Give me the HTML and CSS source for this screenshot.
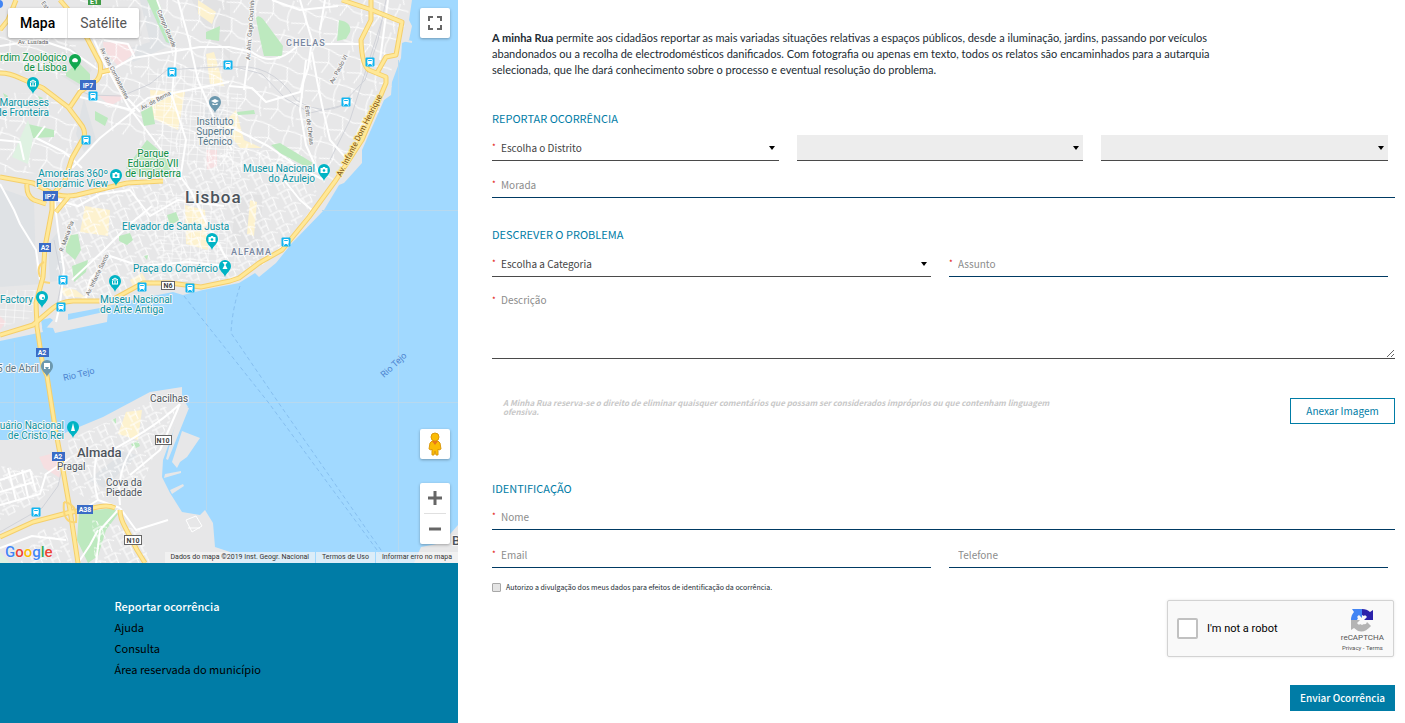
FILE: index.html
```html
<!DOCTYPE html>
<html lang="pt">
<head>
<meta charset="utf-8">
<title>A minha Rua</title>
<link rel="stylesheet" href="styles.css">
</head>
<body>
<div class="page">
  <aside class="side">
    <div class="map">
      <svg class="map-canvas" viewBox="0 0 458 563" preserveAspectRatio="xMidYMid slice" role="img" aria-label="Mapa de Lisboa">
        <defs>
          <pattern id="grid" width="9" height="7" patternUnits="userSpaceOnUse" patternTransform="rotate(4)">
            <path d="M0 0H9M0 0V7" class="thin"/>
          </pattern>
          <pattern id="weave" width="17" height="15" patternUnits="userSpaceOnUse" patternTransform="rotate(-28)">
            <path d="M0 2H12L17 6M4 2V15M12 2L10 15M4 9H11" class="thin"/>
          </pattern>
          <pattern id="loose" width="34" height="30" patternUnits="userSpaceOnUse" patternTransform="rotate(18)">
            <path d="M0 8Q14 2 34 8M8 6Q4 18 12 30M8 0V6M22 5L26 18L34 22M12 22L26 18L22 30M0 22H10" class="thin"/>
          </pattern>
          <g id="pin">
            <path d="M0 9C-1 5-6 3-6-2A6 6 0 0 1 6-2C6 3 1 5 0 9Z"/>
          </g>
          <g id="museum" fill="none" stroke="#fff"><path d="M-3-3L0-5L3-3ZM-2.500-2V1M0-2V1M2.500-2V1M-3 1H3"/></g>
          <g id="camera"><path d="M-3.500-4H-1.500L-1-5H1L1.500-4H3.500V1H-3.500Z" fill="#fff"/><circle cy="-1.500" r="1.300" class="teal"/></g>
          <g id="train">
            <rect x="-4.500" y="-4.500" width="9" height="9" rx="1" fill="#12b5f0"/>
            <rect x="-2.700" y="-3" width="5.400" height="5" rx="1" fill="#fff"/>
            <path d="M-1.800-1.500H1.800" stroke="#12b5f0"/>
            <path d="M-2.500 3.500L-1.500 2M2.500 3.500L1.500 2" stroke="#fff"/>
          </g>
          <g id="trunk" fill="none" stroke-linejoin="round">
            <path d="M0 73Q10 73 20 78L43 88L68 107L80 123Q86 130 84 137L72 158L65 180L54 193"/>
            <path d="M16 0L8 20L0 30M60 0L77 20L88 40L100 63Q102 74 97 80L80 92L70 107M101 72L110 70"/>
            <path d="M0 177L33 183L50 192Q62 198 77 195L127 183L163 181M27 184Q26 196 34 200L46 204M70 195L56 212"/>
            <path d="M52 193V210L45 247L43 277L36 303L37 327L43 367L47 376L55 427L63 470L70 510L78 563"/>
            <path d="M0 335L33 325L53 308Q60 302 73 301H110L143 283H170L201 287L230 281L239 278L259 263L282 250L309 217L336 180L362 140L386 83V77L369 70Q362 66 361 40L371 20V0"/>
            <path d="M342 0L372 10L402 22L396 55L386 57L377 73"/>
            <path d="M0 537L33 522L67 513L93 508Q108 504 115 508M120 510Q120 518 125 527L137 550L145 563"/>
          </g>
        </defs>

        <rect width="458" height="563" fill="#e7e7e8"/>

        <g fill="#dfe2e5">
          <path d="M0 188L34 200L36 270L42 284L0 287Z"/>
          <path d="M140 0H157L172 45L133 62L124 50L150 42Z"/>
          <path d="M84 98L96 140L84 152L76 134ZM48 244L58 232L64 280L50 282Z"/>
          <path d="M88 480L124 452L138 455L104 488ZM205 110L224 106L222 122L204 124Z"/>
        </g>
        <path d="M192 0H230V60L212 42ZM0 40H66L92 70L78 86L40 62H0ZM235 195H262V262L232 244Z" fill="#dedede" opacity=".5"/>
        <g fill="#f6dfe1">
          <path d="M103 42L128 43L135 53L118 66L104 50ZM98 95H130L110 106ZM39 457L58 452L60 478L44 468ZM206 150H217V166L207 170ZM0 316L6 322L0 330Z"/>
        </g>
        <g fill="#fdf2cf">
          <path d="M85 206L110 210L108 236L80 232ZM150 90L185 92L178 130L152 118ZM198 0L216 12L212 24L198 14ZM206 54L214 52L224 86L210 84ZM126 412L142 410L138 440L118 434ZM185 205L205 210L208 250L186 244ZM250 200L257 202L254 236L247 234ZM60 287L76 290L86 298L64 296ZM130 280L142 273L146 280L134 288ZM222 125L236 110L244 140L262 148L240 148Z"/>
        </g>

        <path d="M80 0H412L380 110L335 183L270 180L150 150L110 130Z" fill="url(#loose)"/>
        <path d="M56 95L80 130L70 175L0 172V92ZM0 30L80 34L64 80L0 70Z" fill="url(#loose)"/>
        <path d="M146 70L222 62L232 150L220 180L160 150Z" fill="url(#grid)"/>
        <path d="M56 200L230 150L300 150L318 195L280 246L230 280L140 282L104 300L60 300L56 270L66 240Z" fill="url(#weave)"/>
        <path d="M150 195L210 190L240 265L160 280Z" fill="url(#grid)"/>
        <path d="M228 92L242 94L240 180L226 190ZM0 290L40 290L30 318L0 328Z" fill="url(#grid)"/>

        <g fill="#bde9bf">
          <path d="M66 73L78 62L90 74L90 90L66 76Z"/>
          <path d="M206 32L220 26L219 41L206 39Z"/>
          <path d="M147 0H158L176 46L166 42Z"/>
          <path d="M141 112L152 106L155 124L144 126ZM95 111L108 118L105 126L95 120ZM147 140L168 158L170 170L140 176L126 168Z"/>
          <path d="M256 18Q258 14 263 19L283 46L282 56L264 56Q260 40 256 18Z"/>
          <path d="M339 20Q352 22 350 32L346 39L337 41Z"/>
          <path d="M237 112L254 110L255 114L238 115ZM65 236L78 234L81 250L75 260L66 252ZM72 266L88 260L86 272L74 282ZM119 236L130 233L133 240L127 245L119 241ZM167 215L176 212L179 220L170 226ZM131 444L138 441L140 446L134 449ZM144 256L148 255L147 260ZM112 420L116 418V424Z"/>
          <path d="M79 512L114 508L118 514L106 530L98 556L88 563L77 540Z"/>
          <path d="M28 124L54 130L54 137L33 138ZM3 93L8 96L6 100ZM38 96L43 98L40 101Z"/>
          <path d="M271 145L280 143L313 163L308 168L280 153Z"/>
        </g>
        <path d="M28 120L33 138L28 164L12 157ZM0 552L0 563H10Z" fill="#dff2e2"/>

        <g fill="none" stroke="#d1d3d9" stroke-width="1">
          <path d="M78 90L90 95L122 96L150 84L167 70L232 66L262 74L285 98L310 113L340 106L365 80L378 40L386 0"/>
          <path d="M229 68Q270 60 296 100Q330 120 352 98M330 160L350 120L382 20"/>
          <path d="M0 532L42 508L58 486L64 460M56 310L62 280L54 240"/>
        </g>

        <g class="road">
          <path d="M78 90Q110 70 133 58L200 47L229 47L252 52Q270 66 290 52L300 44H361"/>
          <path d="M88 26L103 60L128 106L163 152L190 190L206 222L226 258"/>
          <path d="M80 97L132 110L148 98L229 82M0 46L40 40L70 50L96 68"/>
          <path d="M135 110L100 138L72 168M135 58L128 44L104 40M178 0L189 40L198 80L214 118L232 150"/>
          <path d="M157 0L176 50L172 96L186 140L180 180"/>
          <path d="M229 86L252 88L266 102L300 92L308 68L312 40L300 0M312 52L317 80L322 105L330 140L346 158"/>
          <path d="M229 126L268 146L300 168L324 180M306 60L300 110L306 145L318 172"/>
          <path d="M252 0L248 60L244 90M272 0L300 10L338 6M325 0L320 30M388 0L380 60"/>
          <path d="M0 184L14 210L20 224L36 250L40 280M54 196L58 230L64 270L60 304L56 322"/>
          <path d="M56 200L78 206L100 194L130 190L150 216L178 200L224 206M72 280L104 250L130 224L152 206"/>
          <path d="M86 298L90 280L110 256L140 266L188 262L226 266M284 180L300 200L312 210L290 240L262 264"/>
          <path d="M180 404Q150 432 96 458Q92 480 98 500L120 508M180 404L160 450L130 475M134 446Q116 470 120 505"/>
          <path d="M0 505L40 494L46 474L70 458M98 500L82 510M0 548L32 536L66 540M120 508L136 530L168 520M96 563L100 530L118 510"/>
          <path d="M78 563L90 545L98 530M0 480L30 470L36 492M0 492L34 482M8 468L16 500M22 470L28 497"/>
          <path d="M45 126L36 138L64 152L82 168M0 140L20 142L24 160M103 60L118 88L140 112"/>
        </g>
        <g fill="url(#weave)">
          <path d="M68 440L150 402L176 410L160 440L140 490L90 500L72 490Z"/>
          <path d="M0 466L40 472L60 480L40 500L0 520ZM40 530L66 526L72 563H20ZM92 520L140 530L150 563H95Z"/>
        </g>

        <path class="water" d="M412 0L409 20L412 26L409 40L402 43L401 58L392 82L391 95L384 100L381 107L362 150V163L344 183L339 185L324 210L292 243L276 263L259 277L255 273L239 283L229 285L203 290L183 295L173 292L133 300L100 308L68 314V320L108 311L107 322L55 333L53 328L42 327L43 332L0 341V440L53 440L67 432L103 417L150 392L182 387V397L188 407L176 424L163 460L162 477L170 493L182 512L200 515L205 510L213 523L215 547L230 552V563H414L421 547L442 543L451 533L458 525V0Z"/>
        <path d="M182 431L200 438L187 457L180 462L177 468L172 462ZM165 474L181 471V473L164 478ZM180 406L189 408L168 460L166 459ZM170 490L183 484L184 486L172 494Z" fill="#e7e7e8"/>
        <path d="M43 332L53 320L50 318L41 320Z" class="water"/>
        <path d="M384 96L391 86M380 105L384 96M402 40L412 42" stroke="#e7e7e8" stroke-width="2"/>
        <path d="M398.500 60V563M14.500 342V440M206.500 292V510M322 210.500H458M188 402.500H458M0 402.500H124" fill="none" stroke="#b7d9ef"/>
        <path d="M240 286Q232 310 231 333L278 402L390 563M184 296L268 402L380 554" fill="none" stroke="#86bff0" stroke-dasharray="4 3"/>
        <path d="M186 520L196 516L202 526L192 532ZM188 528H200" fill="none" stroke="#fff"/>

        <use href="#trunk" class="trunk-edge"/>
        <use href="#trunk" class="trunk-fill"/>
        <path d="M40 277Q36 266 44 262M44 282L50 283M64 502Q78 504 76 522Q62 524 64 502" fill="none" stroke="#fad676" stroke-width="2"/>

        <g class="label park">
          <text x="67" y="61" text-anchor="end">rdim Zoológico</text><text x="67" y="71" text-anchor="end">de Lisboa</text>
          <text x="153" y="157" text-anchor="middle">Parque</text><text x="153" y="167" text-anchor="middle">Eduardo VII</text><text x="153" y="177" text-anchor="middle">de Inglaterra</text>
        </g>
        <g class="label sight">
          <text x="49" y="106" text-anchor="end">Marqueses</text><text x="49" y="116" text-anchor="end">de Fronteira</text>
          <text x="108" y="177" text-anchor="end">Amoreiras 360º</text><text x="108" y="187" text-anchor="end">Panoramic View</text>
          <text x="315" y="172" text-anchor="end">Museu Nacional</text><text x="315" y="182" text-anchor="end">do Azulejo</text>
          <text x="122" y="230">Elevador de Santa Justa</text>
          <text x="133" y="272">Praça do Comércio</text>
          <text x="100" y="303">Museu Nacional</text><text x="100" y="313">de Arte Antiga</text>
          <text x="33" y="303" text-anchor="end">Factory</text>
          <text x="64" y="429" text-anchor="end">uário Nacional</text><text x="64" y="439" text-anchor="end">de Cristo Rei</text>
        </g>
        <g class="label civic">
          <text x="215" y="125" text-anchor="middle">Instituto</text><text x="215" y="135" text-anchor="middle">Superior</text><text x="215" y="145" text-anchor="middle">Técnico</text>
          <text x="39" y="372" text-anchor="end">5 de Abril</text>
        </g>
        <g class="label place">
          <text x="150" y="402">Cacilhas</text><text x="57" y="470">Pragal</text>
          <text x="124" y="486" text-anchor="middle">Cova da</text><text x="124" y="496" text-anchor="middle">Piedade</text>
        </g>
        <text class="label city" x="185" y="203">Lisboa</text>
        <text class="label town" x="77" y="457">Almada</text>
        <text class="label town" x="452" y="545">B</text>
        <g class="label district"><text x="286" y="46">CHELAS</text><text x="231" y="255">ALFAMA</text></g>
        <g class="label street">
          <text x="18" y="44">Av. Lusíada</text>
          <text transform="translate(41 3) rotate(55)">Estr.</text>
          <text transform="translate(100 49) rotate(63)">Av. dos Combatentes</text>
          <text transform="translate(157 11) rotate(67)">Campo Grande</text>
          <text transform="translate(142 110) rotate(-28)">Av. de Berna</text>
          <text transform="translate(250 60) rotate(-86)">Av. Alm. Gago Coutinho</text>
          <text transform="translate(333 84) rotate(-62)">Av. Paulo VI</text>
          <text transform="translate(305 106) rotate(83)">Estr. de Chelas</text>
          <text transform="translate(63 252) rotate(-70)">R. Maria Pia</text>
          <text transform="translate(89 296) rotate(-64)">Av. Infante Santo</text>
        </g>
        <text class="label avenue" transform="translate(341 177) rotate(-63)">Av. Infante Dom Henrique</text>
        <g class="label river"><text transform="translate(64 381) rotate(-14)">Rio Tejo</text><text transform="translate(384 378) rotate(-43)">Rio Tejo</text></g>

        <g class="shield">
          <rect x="80" y="80" width="16" height="10"/><text x="88" y="88">IP7</text>
          <rect x="43" y="191" width="15" height="10"/><text x="50" y="199">IP7</text>
          <rect x="39" y="243" width="12" height="9"/><text x="45" y="250">A2</text>
          <rect x="36" y="348" width="13" height="9"/><text x="42" y="355">A2</text>
          <rect x="52" y="452" width="13" height="9"/><text x="58" y="459">A2</text>
          <rect x="77" y="505" width="16" height="9"/><text x="85" y="512">A38</text>
        </g>
        <g class="shield national">
          <rect x="161.500" y="281.500" width="13" height="8"/><text x="168" y="288">N6</text>
          <rect x="155.500" y="435.500" width="16" height="9"/><text x="163" y="443">N10</text>
          <rect x="124.500" y="535.500" width="17" height="9"/><text x="133" y="543">N10</text>
        </g>
        <g class="shield european"><rect x="88" y="-5" width="13" height="10"/><text x="94" y="4">E1</text></g>

        <g fill="#12a84f"><use href="#pin" x="75" y="62"/></g>
        <path d="M72 60Q75 56 78 60Q78 63 75 62Q72 63 72 60Z" fill="#fff"/>
        <g class="teal">
          <use href="#pin" x="33" y="85"/><use href="#pin" x="116" y="177"/><use href="#pin" x="324" y="172"/>
          <use href="#pin" x="212" y="241"/><use href="#pin" x="225" y="268"/><use href="#pin" x="115" y="283"/>
          <use href="#pin" x="42" y="299"/><use href="#pin" x="73" y="429"/>
        </g>
        <g fill="#6c98ae"><use href="#pin" x="215" y="104"/><use href="#pin" x="47" y="368"/></g>
        <use href="#museum" x="33" y="85"/><use href="#museum" x="115" y="283"/>
        <use href="#camera" x="116" y="177"/><use href="#camera" x="324" y="172"/><use href="#camera" x="212" y="241"/>
        <g fill="#fff">
          <path d="M222.500 262H227.500L225.500 265L227.500 269H222.500L224.500 265ZM73 423L75 431H71ZM215 99L219 101L215 103L211 101ZM212.500 103L215 104.500L217.500 103V105H212.500Z"/>
          <path d="M44 369V363H50V369H48L49 367H45L46 369Z"/>
          <circle cx="42" cy="297" r="3"/>
        </g>
        <circle cx="43" cy="298" r="1" class="teal"/>

        <use href="#train" x="172" y="72"/><use href="#train" x="93" y="96"/><use href="#train" x="86" y="140"/>
        <use href="#train" x="228" y="65"/><use href="#train" x="370" y="62"/>
        <use href="#train" x="346" y="102"/><use href="#train" x="286" y="242"/><use href="#train" x="63" y="280"/>
        <use href="#train" x="61" y="307"/><use href="#train" x="142" y="287"/><use href="#train" x="190" y="288"/>
        <use href="#train" x="36" y="512"/>
        <circle cx="-1" cy="4" r="4" fill="#4285f4"/>
      </svg>

      <div class="map-types">
        <button type="button" class="map-type is-active">Mapa</button>
        <button type="button" class="map-type">Satélite</button>
      </div>
      <button type="button" class="map-btn fullscreen" aria-label="Ecrã inteiro">
        <svg width="14" height="14" viewBox="0 0 14 14"><path d="M1 5V1H5M9 1H13V5M13 9V13H9M5 13H1V9" fill="none" stroke="#666" stroke-width="2"/></svg>
      </button>
      <div class="map-tools">
        <button type="button" class="map-btn" aria-label="Street View">
          <svg width="14" height="24" viewBox="0 0 14 24">
            <path d="M4 9H10L12 11L13 17L11 18L10 17V23H8L7 19L6 23H4V17L3 18L1 17L2 11Z" fill="#fbbc05" stroke="#dc9a0c"/>
            <path d="M4 9H10L7 13Z" fill="#e8751a"/>
            <circle cx="7" cy="5" r="4" fill="#fbbc05" stroke="#dc9a0c"/>
          </svg>
        </button>
        <div class="zoom">
          <button type="button" class="zoom-btn" aria-label="Aumentar"><svg width="14" height="14" viewBox="0 0 14 14"><path d="M7 0V14M0 7H14" stroke="#666" stroke-width="3"/></svg></button>
          <button type="button" class="zoom-btn" aria-label="Diminuir"><svg width="14" height="14" viewBox="0 0 14 14"><path d="M1 7H13" stroke="#666" stroke-width="3"/></svg></button>
        </div>
      </div>
      <a class="google" href="#google"><span class="g-blue">G</span><span class="g-red">o</span><span class="g-yellow">o</span><span class="g-blue">g</span><span class="g-green">l</span><span class="g-red">e</span></a>
      <div class="credits">
        <span>Dados do mapa ©2019 Inst. Geogr. Nacional</span>
        <a href="#termos">Termos de Uso</a>
        <a href="#erro">Informar erro no mapa</a>
      </div>
    </div>
    <nav class="menu">
      <a class="menu-link is-current" href="#reportar">Reportar ocorrência</a>
      <a class="menu-link" href="#ajuda">Ajuda</a>
      <a class="menu-link" href="#consulta">Consulta</a>
      <a class="menu-link" href="#area">Área reservada do município</a>
    </nav>
  </aside>

  <main class="content">
    <p class="intro"><strong>A minha Rua</strong> permite aos cidadãos reportar as mais variadas situações relativas a espaços públicos, desde a iluminação, jardins, passando por veículos abandonados ou a recolha de electrodomésticos danificados. Com fotografia ou apenas em texto, todos os relatos são encaminhados para a autarquia selecionada, que lhe dará conhecimento sobre o processo e eventual resolução do problema.</p>
    <form class="form">
      <section class="section">
        <h2 class="title">REPORTAR OCORRÊNCIA</h2>
        <div class="row thirds">
          <label class="field pick"><span class="star">*</span><select class="control" aria-label="Distrito"><option>Escolha o Distrito</option></select></label>
          <label class="field pick off"><select class="control" aria-label="Concelho" disabled><option></option></select></label>
          <label class="field pick off"><select class="control" aria-label="Freguesia" disabled><option></option></select></label>
        </div>
        <label class="field navy"><span class="star">*</span><input class="control" type="text" placeholder="Morada" aria-label="Morada"></label>
      </section>

      <section class="section">
        <h2 class="title">DESCREVER O PROBLEMA</h2>
        <div class="row halves">
          <label class="field pick"><span class="star">*</span><select class="control" aria-label="Categoria"><option>Escolha a Categoria</option></select></label>
          <label class="field navy"><span class="star">*</span><input class="control" type="text" placeholder="Assunto" aria-label="Assunto"></label>
        </div>
        <label class="field area"><span class="star">*</span><textarea class="control" placeholder="Descrição" aria-label="Descrição"></textarea></label>
        <div class="attach">
          <p class="notice">A Minha Rua reserva-se o direito de eliminar quaisquer comentários que possam ser considerados impróprios ou que contenham linguagem ofensiva.</p>
          <button type="button" class="btn">Anexar Imagem</button>
        </div>
      </section>

      <section class="section identity">
        <h2 class="title">IDENTIFICAÇÃO</h2>
        <label class="field navy"><span class="star">*</span><input class="control" type="text" placeholder="Nome" aria-label="Nome"></label>
        <div class="row halves contact">
          <label class="field navy"><span class="star">*</span><input class="control" type="email" placeholder="Email" aria-label="Email"></label>
          <label class="field navy"><span class="star"></span><input class="control" type="tel" placeholder="Telefone" aria-label="Telefone"></label>
        </div>
        <label class="consent"><input class="tick" type="checkbox"><span>Autorizo a divulgação dos meus dados para efeitos de identificação da ocorrência.</span></label>
      </section>

      <div class="captcha">
        <label class="robot"><input class="robot-box" type="checkbox"><span>I'm not a robot</span></label>
        <div class="brand">
          <svg width="24" height="24" viewBox="0 0 24 24">
            <path d="M12 1Q17 1 20 4L23 2V12H14L17 9Q15 6 14 8L12 7Z" fill="#2b22ab"/>
            <path d="M1 12Q1 7 4 4L2 1H12V10L9 7Q6 9 8 10L7 12Z" fill="#4285f4"/>
            <path d="M1 12H10L7 15Q9 18 10 16L12 17L14 16Q16 17 17 14L21 18Q12 28 4 20L1 22Z" fill="#b4b4b4"/>
          </svg>
          <span class="brand-name">reCAPTCHA</span>
          <span class="legal"><a href="#privacy">Privacy</a> - <a href="#terms">Terms</a></span>
        </div>
      </div>
      <button type="submit" class="btn primary">Enviar Ocorrência</button>
    </form>
  </main>
</div>
</body>
</html>
```
FILE: styles.css
```css
*, *::before, *::after { box-sizing: border-box; }
body { margin: 0; background: #fff; color: #222b33; font-family: "Noto Sans CJK SC", "Open Sans", sans-serif; font-size: 10px; line-height: 18px; }
a { color: inherit; text-decoration: none; }
button, input, select, textarea { margin: 0; font: inherit; color: inherit; }
button { cursor: pointer; }

.page { display: grid; grid-template-columns: 458fr 947fr; min-height: 100vh; }

/* Map */
.side { display: flex; flex-direction: column; background: #007ca6; }
.map { position: relative; flex: 1; min-height: 400px; overflow: hidden; font-family: Roboto, sans-serif; }
.map-canvas { position: absolute; inset: 0; display: block; width: 100%; height: 100%; }
.thin { fill: none; stroke: #fff; stroke-width: 1; }
.road { fill: none; stroke: #fff; stroke-width: 2; stroke-linejoin: round; }
.water { fill: #a1d9ff; }
.teal { fill: #00b4c5; }
.trunk-edge { stroke: #f5cf6b; stroke-width: 5; }
.trunk-fill { stroke: #ffe897; stroke-width: 3; }
.label { font-family: Roboto, sans-serif; font-size: 10px; paint-order: stroke; stroke: #f6f6f6; stroke-width: 2px; stroke-linejoin: round; }
.park { fill: #0b8f43; }
.sight { fill: #0a93a3; }
.civic { fill: #56788a; }
.place { fill: #50575d; }
.city { font-size: 17px; font-weight: 500; fill: #4c535c; letter-spacing: 1px; }
.town { font-size: 13px; font-weight: 500; fill: #4c535c; }
.district { font-size: 9px; fill: #7786a0; letter-spacing: 1px; font-weight: 500; }
.street { font-size: 6px; fill: #666; }
.avenue { font-size: 8px; fill: #7c5210; stroke: #ffe897; }
.river { font-size: 9px; fill: #4d84cf; stroke: none; }
.shield { font-size: 7px; font-weight: 700; text-anchor: middle; fill: #fff; }
.shield rect { fill: #3a6cc6; }
.national { fill: #444; }
.national rect { fill: #fff; stroke: #666; }
.european rect { fill: #3f9b46; }

.map-types { position: absolute; top: 8px; left: 8px; display: flex; background: #fff; border-radius: 2px; box-shadow: 0 1px 3px rgba(0, 0, 0, .3); }
.map-type { height: 30px; padding: 0 12px; border: 0; background: none; font-size: 14px; color: #565656; }
.map-type + .map-type { border-left: 1px solid #e6e6e6; }
.map-type.is-active { font-weight: 500; color: #000; }
.map-btn { display: grid; place-items: center; width: 30px; height: 30px; padding: 0; border: 0; border-radius: 2px; background: #fff; box-shadow: 0 1px 3px rgba(0, 0, 0, .3); }
.fullscreen { position: absolute; top: 8px; right: 8px; }
.map-tools { position: absolute; right: 8px; bottom: 19px; display: grid; gap: 24px; }
.zoom { display: grid; width: 30px; padding: 0 4px; border-radius: 2px; background: #fff; box-shadow: 0 1px 3px rgba(0, 0, 0, .3); }
.zoom-btn { display: grid; place-items: center; height: 30px; padding: 0; border: 0; background: none; }
.zoom-btn + .zoom-btn { height: 31px; border-top: 1px solid #e0e0e0; }
.google { position: absolute; left: 5px; bottom: 0; font-size: 15px; font-weight: 500; line-height: 22px; text-shadow: 0 0 1px #fff, 0 0 1px #fff; }
.g-blue { color: #4285f4; }
.g-red { color: #ea4335; }
.g-yellow { color: #fbbc05; }
.g-green { color: #34a853; }
.credits { position: absolute; right: 0; bottom: 0; display: flex; gap: 1px; font-size: 7px; line-height: 11px; color: #333; white-space: nowrap; }
.credits > * { padding: 0 6px; background: rgba(245, 245, 245, .7); }

.menu { display: flex; flex-direction: column; gap: 3px; padding: 34px 16px 45px 25%; font-size: 11px; color: #000; }
.menu-link.is-current { color: #fff; font-weight: 500; }

/* Form */
.content { padding: 30px 10px 12px 34px; }
.intro { max-width: 736px; margin: 0 0 31px; font-family: Lato, sans-serif; font-size: 11px; line-height: 16px; }
.form { display: flex; flex-direction: column; }
.section { margin-bottom: 27px; }
.title { margin: 0 0 8px; font-size: 11px; font-weight: 400; line-height: 18px; color: #007ca6; }
.row { display: grid; gap: 18px; margin: 0 7px 11px 0; }
.thirds { grid-template-columns: repeat(3, 1fr); }
.halves { grid-template-columns: repeat(2, 1fr); }
.field { position: relative; display: flex; height: 26px; border-bottom: 1px solid #4a4a4a; }
.navy { border-color: #003a63; }
.star { flex: none; width: 9px; padding-top: 3px; color: #e00000; font-size: 8px; line-height: 18px; }
.control { flex: 1; min-width: 0; padding: 0; border: 0; border-radius: 0; outline: 0; background: none; color: #444; line-height: 18px; appearance: none; }
.control::placeholder { color: #8c8c8c; opacity: 1; }
.pick::after { content: ""; position: absolute; right: 4px; top: 11px; border: 3px solid transparent; border-top: 4px solid #000; border-bottom: 0; pointer-events: none; }
.off { background: #ededed; }
.area { height: auto; }
textarea.control { height: 70px; padding-top: 3px; resize: vertical; }
.attach { display: flex; justify-content: space-between; align-items: flex-start; margin-top: 39px; }
.notice { width: 64%; margin: 0 0 0 11px; font-size: 8px; font-weight: 700; font-style: italic; line-height: 9px; color: #c8c8c8; }
.btn { width: 105px; height: 26px; padding: 0; border: 1px solid #007ca6; background: #fff; color: #007ca6; line-height: 18px; }
.primary { align-self: flex-end; background: #007ca6; color: #fff; font-weight: 500; }
.identity { margin: 28px 0 5px; }
.identity .title { margin-bottom: 7px; }
.contact { margin-top: 12px; }
.consent { display: flex; align-items: center; gap: 5px; height: 16px; font-size: 7px; line-height: 16px; }
.tick { appearance: none; width: 9px; height: 9px; border: 1px solid #a8a8a8; border-radius: 1px; background: #e4e4e4; }

.captcha { align-self: flex-end; display: flex; justify-content: space-between; width: 227px; height: 57px; margin: 0 1px 28px 0; padding: 0 9px; border: 1px solid #d3d3d3; border-radius: 2px; background: #f9f9f9; box-shadow: 0 0 3px rgba(0, 0, 0, .1); font-family: Roboto, sans-serif; color: #000; }
.robot { display: flex; align-items: center; gap: 9px; font-size: 11px; }
.robot-box { appearance: none; width: 21px; height: 21px; border: 2px solid #c1c1c1; border-radius: 2px; background: #fff; }
.brand { display: flex; flex-direction: column; align-items: center; padding-top: 7px; color: #555; }
.brand-name { font-size: 8px; line-height: 12px; }
.legal { font-size: 6px; line-height: 8px; }
```
